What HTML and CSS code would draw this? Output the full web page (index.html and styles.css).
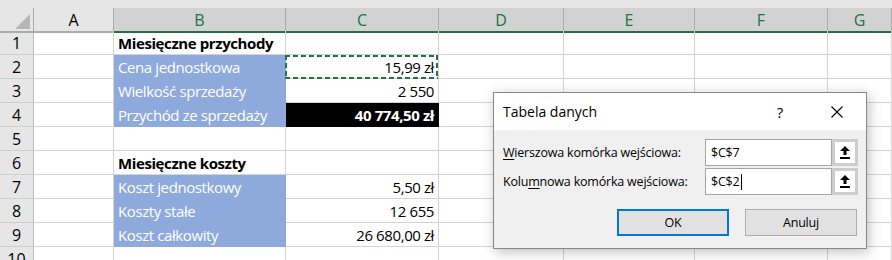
FILE: index.html
```html
<!DOCTYPE html>
<html lang="pl">
<head>
    <meta charset="UTF-8">
    <meta name="viewport" content="width=device-width, initial-scale=1.0">
    <title>Tabela danych</title>
    <link rel="stylesheet" href="styles.css">
</head>
<body>
    <div class="sheet">
        <div class="strip"></div>

        <div class="row head">
            <div class="corner"><span class="tri"></span></div>
            <div class="col">A</div>
            <div class="col sel">B</div>
            <div class="col sel">C</div>
            <div class="col sel">D</div>
            <div class="col sel">E</div>
            <div class="col sel">F</div>
            <div class="col sel">G</div>
        </div>

        <div class="row">
            <div class="num">1</div><div class="cell"></div>
            <div class="cell bold">Miesięczne przychody</div>
            <div class="cell"></div><div class="cell"></div><div class="cell"></div><div class="cell"></div><div class="cell"></div>
        </div>
        <div class="row">
            <div class="num">2</div><div class="cell"></div>
            <div class="cell fill">Cena jednostkowa</div>
            <div class="cell right copy">15,99 zł</div>
            <div class="cell"></div><div class="cell"></div><div class="cell"></div><div class="cell"></div>
        </div>
        <div class="row">
            <div class="num">3</div><div class="cell"></div>
            <div class="cell fill">Wielkość sprzedaży</div>
            <div class="cell right">2 550</div>
            <div class="cell"></div><div class="cell"></div><div class="cell"></div><div class="cell"></div>
        </div>
        <div class="row">
            <div class="num">4</div><div class="cell"></div>
            <div class="cell fill">Przychód ze sprzedaży</div>
            <div class="cell right total">40 774,50 zł</div>
            <div class="cell"></div><div class="cell"></div><div class="cell"></div><div class="cell"></div>
        </div>
        <div class="row">
            <div class="num">5</div><div class="cell"></div><div class="cell"></div><div class="cell"></div>
            <div class="cell"></div><div class="cell"></div><div class="cell"></div><div class="cell"></div>
        </div>
        <div class="row">
            <div class="num">6</div><div class="cell"></div>
            <div class="cell bold">Miesięczne koszty</div>
            <div class="cell"></div><div class="cell"></div><div class="cell"></div><div class="cell"></div><div class="cell"></div>
        </div>
        <div class="row">
            <div class="num">7</div><div class="cell"></div>
            <div class="cell fill">Koszt jednostkowy</div>
            <div class="cell right">5,50 zł</div>
            <div class="cell"></div><div class="cell"></div><div class="cell"></div><div class="cell"></div>
        </div>
        <div class="row">
            <div class="num">8</div><div class="cell"></div>
            <div class="cell fill">Koszty stałe</div>
            <div class="cell right">12 655</div>
            <div class="cell"></div><div class="cell"></div><div class="cell"></div><div class="cell"></div>
        </div>
        <div class="row">
            <div class="num">9</div><div class="cell"></div>
            <div class="cell fill">Koszt całkowity</div>
            <div class="cell right">26 680,00 zł</div>
            <div class="cell"></div><div class="cell"></div><div class="cell"></div><div class="cell"></div>
        </div>
        <div class="row">
            <div class="num">10</div><div class="cell"></div><div class="cell"></div><div class="cell"></div>
            <div class="cell"></div><div class="cell"></div><div class="cell"></div><div class="cell"></div>
        </div>
    </div>

    <div class="dialog">
        <div class="dlg-title">
            <span class="dlg-name">Tabela danych</span>
            <span class="help">?</span>
            <svg class="close" width="12" height="12" viewBox="0 0 12 12">
                <path d="M0.5 0.5 L11.5 11.5 M11.5 0.5 L0.5 11.5" stroke="#000" stroke-width="1.1" fill="none"/>
            </svg>
        </div>
        <div class="dlg-body">
            <div class="field">
                <label><u>W</u>ierszowa komórka wejściowa:</label>
                <div class="input">$C$7</div>
                <div class="pick">
                    <svg width="10" height="13" viewBox="0 0 10 13">
                        <path d="M5 0 L10 5 H6.5 V9 H3.5 V5 H0 Z" fill="#000"/>
                        <rect x="0" y="11" width="10" height="2" fill="#000"/>
                    </svg>
                </div>
            </div>
            <div class="field">
                <label>Kolu<u>m</u>nowa komórka wejściowa:</label>
                <div class="input">$C$2<span class="caret"></span></div>
                <div class="pick">
                    <svg width="10" height="13" viewBox="0 0 10 13">
                        <path d="M5 0 L10 5 H6.5 V9 H3.5 V5 H0 Z" fill="#000"/>
                        <rect x="0" y="11" width="10" height="2" fill="#000"/>
                    </svg>
                </div>
            </div>
            <div class="buttons">
                <button class="btn default">OK</button>
                <button class="btn">Anuluj</button>
            </div>
        </div>
    </div>
</body>
</html>
```
FILE: styles.css
```css
body {
    margin: 0;
    background: #fff;
    overflow: hidden;
}
.sheet {
    font-family: "Open Sans", sans-serif;
    font-size: 15px;
    letter-spacing: -0.4px;
    color: #000;
}
.strip {
    height: 8px;
    background: #e6e6e6;
}
.row {
    display: grid;
    grid-template-columns: 34px 80px 172px 153px 125px 131px 133px 1fr;
    height: 24px;
}
.row > div {
    box-sizing: border-box;
    border-right: 1px solid #d4d4d4;
    border-bottom: 1px solid #d4d4d4;
    display: flex;
    align-items: center;
    white-space: nowrap;
}
.head {
    height: 23px;
}
.head > div {
    background: #e6e6e6;
    border-right: 1px solid #ababab;
    border-bottom: 2px solid #ababab;
    justify-content: center;
    padding-top: 1px;
    font-size: 16px;
    letter-spacing: 0;
}
.head .sel {
    background: #d2d2d2;
    color: #217346;
    border-bottom-color: #217346;
}
.corner {
    position: relative;
}
.tri {
    position: absolute;
    right: 3px;
    bottom: 2px;
    width: 0;
    height: 0;
    border-left: 15px solid transparent;
    border-bottom: 15px solid #b6b6b6;
}
.num {
    justify-content: center;
    background: #e6e6e6;
    font-size: 16px;
    letter-spacing: 0;
    border-right-color: #bcbcbc !important;
    border-bottom-color: #cfcfcf !important;
}
.cell {
    padding: 1px 4px 0;
}
.right {
    justify-content: flex-end;
}
.bold {
    font-weight: 700;
}
.fill {
    background: #8ea9db;
    border-color: #8ea9db !important;
    color: #fff;
}
.total {
    background: #000;
    border-color: #000 !important;
    color: #fff;
    font-weight: 700;
}
.copy {
    position: relative;
}
.copy::after {
    content: "";
    position: absolute;
    left: -1px;
    top: 0;
    right: 0;
    bottom: -1px;
    background:
        repeating-linear-gradient(90deg, #217346 0 5px, transparent 5px 8px) top / 100% 2px no-repeat,
        repeating-linear-gradient(90deg, #217346 0 5px, transparent 5px 8px) bottom / 100% 2px no-repeat,
        repeating-linear-gradient(180deg, #217346 0 5px, transparent 5px 8px) left / 2px 100% no-repeat,
        repeating-linear-gradient(180deg, #217346 0 5px, transparent 5px 8px) right / 2px 100% no-repeat;
}

/* dialog */
.dialog {
    position: absolute;
    left: 493px;
    top: 92px;
    width: 374px;
    height: 157px;
    box-sizing: border-box;
    border: 1px solid #888;
    background: #f0f0f0;
    box-shadow: 2px 3px 12px rgba(0, 0, 0, 0.25);
    font-family: "Open Sans", sans-serif;
    color: #000;
}
.dlg-title {
    height: 37px;
    background: #fff;
    display: flex;
    align-items: center;
    padding-left: 9px;
}
.dlg-name {
    flex: 1;
    font-size: 14px;
}
.help {
    width: 20px;
    text-align: center;
    font-size: 15px;
    margin-right: 41px;
}
.close {
    margin-right: 23px;
}
.dlg-body {
    padding: 9px 8px 0 9px;
    font-size: 12.5px;
    letter-spacing: -0.2px;
}
.field {
    display: flex;
    align-items: center;
    height: 27px;
    margin-bottom: 2px;
}
.field label {
    width: 202px;
}
.field u {
    text-underline-offset: 2px;
}
.input {
    width: 127px;
    height: 27px;
    box-sizing: border-box;
    border: 1px solid #a5a5a5;
    background: #fff;
    padding-left: 5px;
    display: flex;
    align-items: center;
}
.caret {
    display: inline-block;
    width: 1px;
    height: 16px;
    background: #000;
    margin-left: 1px;
}
.pick {
    width: 26px;
    height: 27px;
    box-sizing: border-box;
    border: 3px solid #cdcdcd;
    background: #fff;
    display: flex;
    align-items: center;
    justify-content: center;
}
.buttons {
    display: flex;
    justify-content: flex-end;
    gap: 16px;
    margin-top: 14px;
    padding-right: 1px;
}
.btn {
    width: 112px;
    height: 27px;
    box-sizing: border-box;
    border: 1px solid #adadad;
    background: #e1e1e1;
    font-family: "Open Sans", sans-serif;
    font-size: 12.5px;
    letter-spacing: -0.2px;
    color: #000;
    padding: 0;
}
.btn.default {
    border: 2px solid #0078d7;
}
```
